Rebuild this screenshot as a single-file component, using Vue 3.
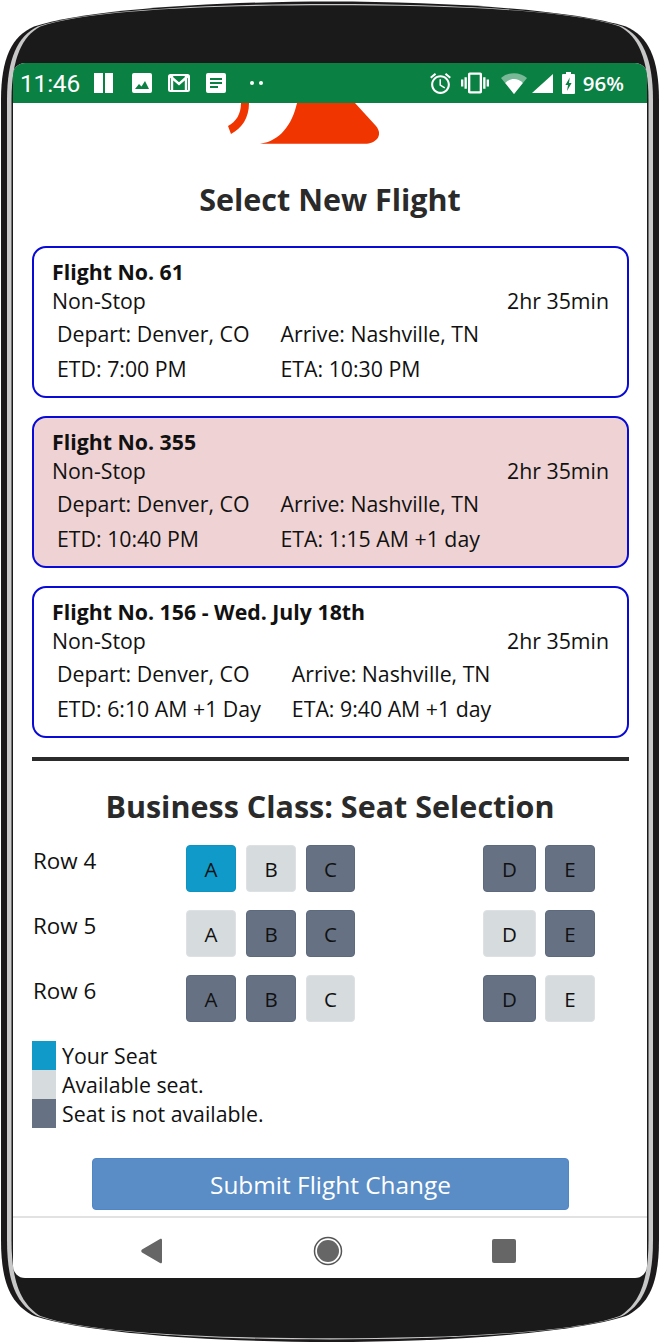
<script setup>
const flights = [
    { id: 61, title: 'Flight No. 61', depart: 'Denver, CO', arrive: 'Nashville, TN', etd: '7:00 PM', eta: '10:30 PM' },
    { id: 355, title: 'Flight No. 355', depart: 'Denver, CO', arrive: 'Nashville, TN', etd: '10:40 PM', eta: '1:15 AM +1 day', selected: true },
    { id: 156, title: 'Flight No. 156 - Wed. July 18th', depart: 'Denver, CO', arrive: 'Nashville, TN', etd: '6:10 AM +1 Day', eta: '9:40 AM +1 day' }
];

const seatRows = [
    { row: 4, seats: { A: 'mine', B: 'open', C: 'taken', D: 'taken', E: 'taken' } },
    { row: 5, seats: { A: 'open', B: 'taken', C: 'taken', D: 'open', E: 'taken' } },
    { row: 6, seats: { A: 'taken', B: 'taken', C: 'open', D: 'taken', E: 'open' } }
];

const legend = [
    { kind: 'mine', label: 'Your Seat' },
    { kind: 'open', label: 'Available seat.' },
    { kind: 'taken', label: 'Seat is not available.' }
];

// phone body outline, l/t = inset from the outer edge
function shell(l, t) {
    const x0 = 1 + l, x1 = 659 - l, y0 = 1.5 + t, y1 = 1342 - t;
    return `M${x0} 100 C${x0} 58 ${12 + l} 36 ${34 + l * 0.6} 26.5
        C90 9 220 ${y0} 330 ${y0} C440 ${y0} 570 9 ${626 - l * 0.6} 26.5
        C${648 - l} 36 ${x1} 58 ${x1} 100 L${x1} 1240
        C${x1} 1285 ${648 - l} 1305 ${626 - l * 0.6} 1316
        C570 1334 440 ${y1} 330 ${y1} C220 ${y1} 90 1334 ${34 + l * 0.6} 1316
        C${12 + l} 1305 ${x0} 1285 ${x0} 1240 Z`;
}
</script>

<template>
    <div class="phone">
        <svg class="phone-body" width="660" height="1343" viewBox="0 0 660 1343">
            <path :d="shell(0, 0)" fill="#1c1a1a" />
            <path :d="shell(6, 2.5)" fill="#c8c8c8" />
            <path :d="shell(10.500, 3.800)" fill="#1a1a1a" />
        </svg>

        <div class="screen">
            <div class="status-bar">
                <div class="status-left">
                    <span class="clock">11:46</span>
                    <svg width="19" height="20" viewBox="0 0 19 20"><path d="M0 0h9v20H0zM11 0h8v20h-8z" fill="#fff" /></svg>
                    <svg class="icon-image" width="20" height="20" viewBox="0 0 20 20">
                        <rect width="20" height="20" rx="2" fill="#fff" />
                        <path d="M3 16l4-5 2.5 2.5L13 8l4 8z" fill="#0b8043" />
                    </svg>
                    <svg width="22" height="18" viewBox="0 0 22 18">
                        <rect x="1" y="1" width="20" height="16" rx="1.5" fill="none" stroke="#fff" stroke-width="2" />
                        <path d="M2 2l9 8 9-8M4 2v15M18 2v15" fill="none" stroke="#fff" stroke-width="2.4" />
                    </svg>
                    <svg width="20" height="20" viewBox="0 0 20 20">
                        <rect width="20" height="20" rx="2" fill="#fff" />
                        <path d="M4 5h12v2H4zM4 9h12v2H4zM4 13h8v2H4z" fill="#0b8043" />
                    </svg>
                    <svg class="icon-dots" width="13" height="4" viewBox="0 0 13 4">
                        <circle cx="2" cy="2" r="2" fill="#fff" />
                        <circle cx="11" cy="2" r="2" fill="#fff" />
                    </svg>
                </div>
                <div class="status-right">
                    <svg width="25" height="25" viewBox="0 0 24 24" class="icon-alarm">
                        <path fill="#fff" d="M22 5.72l-4.6-3.86-1.29 1.53 4.6 3.86L22 5.72zM7.88 3.39L6.6 1.86 2 5.71l1.29 1.53 4.59-3.85zM12.5 8H11v6l4.75 2.85.75-1.23-4-2.37V8zM12 4c-4.97 0-9 4.03-9 9s4.03 9 9 9 9-4.03 9-9-4.03-9-9-9zm0 16c-3.87 0-7-3.13-7-7s3.13-7 7-7 7 3.13 7 7-3.13 7-7 7z" />
                    </svg>
                    <svg width="28" height="28" viewBox="0 0 24 24" class="icon-vibrate">
                        <path fill="#fff" d="M0 15h2V9H0v6zm3 2h2V7H3v10zm19-8v6h2V9h-2zm-3 8h2V7h-2v10zM16.5 3h-9C6.67 3 6 3.67 6 4.5v15c0 .83.67 1.5 1.5 1.5h9c.83 0 1.5-.67 1.5-1.5v-15c0-.83-.67-1.5-1.5-1.5zM16 19H8V5h8v14z" />
                    </svg>
                    <svg width="26" height="21" viewBox="0 0 26 21">
                        <path d="M0 5C7-1.5 19-1.5 26 5L13 21z" fill="#fff" opacity=".45" />
                        <path d="M4.2 10C9 4.8 17 4.8 21.8 10L13 21z" fill="#fff" />
                    </svg>
                    <svg class="icon-signal" width="21" height="19" viewBox="0 0 21 19"><path d="M21 0v19H0z" fill="#fff" /></svg>
                    <svg class="icon-battery" width="13" height="22" viewBox="0 0 13 22">
                        <path d="M4 0h5v2h3a1 1 0 011 1v18a1 1 0 01-1 1H1a1 1 0 01-1-1V3a1 1 0 011-1h3z" fill="#fff" />
                        <path d="M7.8 5.5L3.4 13H6l-1 6 4.6-8H7z" fill="#0b8043" />
                    </svg>
                    <span class="battery-text">96%</span>
                </div>
            </div>

            <div class="content">
                <svg class="logo" width="634" height="41" viewBox="13 103 634 41">
                    <path d="M297 103C292 125 280 141 260 143.8L365 143.8C375 143.8 384 136 376 126L355 103Z" fill="#f03500" />
                    <path d="M249 103C249 118 242 128 231 134L228 126C236 122 241 114 241 103Z" fill="#f03500" />
                </svg>

                <h1 class="page-title">Select New Flight</h1>

                <div class="flight-list">
                    <div v-for="flight in flights" :key="flight.id" class="flight-card" :class="{ selected: flight.selected }">
                        <div class="flight-title">{{ flight.title }}</div>
                        <div class="flight-sub">
                            <span>Non-Stop</span>
                            <span>2hr 35min</span>
                        </div>
                        <div class="flight-times">
                            <span>Depart: {{ flight.depart }}</span>
                            <span>Arrive: {{ flight.arrive }}</span>
                            <span>ETD: {{ flight.etd }}</span>
                            <span>ETA: {{ flight.eta }}</span>
                        </div>
                    </div>
                </div>

                <div class="divider"></div>

                <h2 class="seat-title">Business Class: Seat Selection</h2>

                <div class="seat-grid">
                    <template v-for="r in seatRows" :key="r.row">
                        <div class="row-label">Row {{ r.row }}</div>
                        <div v-for="(kind, letter) in r.seats" :key="letter" class="seat" :class="[kind, 'col-' + letter]">{{ letter }}</div>
                    </template>
                </div>

                <div class="legend">
                    <div v-for="item in legend" :key="item.kind" class="legend-item">
                        <span class="swatch" :class="item.kind"></span>
                        <span>{{ item.label }}</span>
                    </div>
                </div>

                <button class="submit-btn">Submit Flight Change</button>
            </div>

            <div class="nav-bar">
                <svg width="24" height="26" viewBox="0 0 24 26"><path d="M22 2v22c0 1-1 1.600-2 1L2 14.500c-1-.8-1-2 0-3L20 1c1-.6 2 0 2 1z" fill="#666" /></svg>
                <svg width="30" height="30" viewBox="0 0 30 30">
                    <circle cx="15" cy="15" r="13.500" fill="none" stroke="#555" stroke-width="1.500" />
                    <circle cx="15" cy="15" r="11" fill="#666" />
                </svg>
                <svg width="24" height="24" viewBox="0 0 24 24"><rect width="24" height="24" rx="2" fill="#666" /></svg>
            </div>
        </div>
    </div>
</template>

<style scoped>
.phone {
    position: relative;
    width: 660px;
    height: 1343px;
    padding: 63px 13px 65px;
    box-sizing: border-box;
    font-family: "Open Sans", sans-serif;
    color: #111;
    overflow: hidden;
}

.phone-body {
    position: absolute;
    left: 0;
    top: 0;
}

.screen {
    position: relative;
    height: 1215px;
    display: flex;
    flex-direction: column;
    background: #fff;
    border-radius: 12px;
    overflow: hidden;
}

.status-bar {
    height: 40px;
    flex: none;
    display: flex;
    align-items: center;
    justify-content: space-between;
    padding: 0 23px 0 7px;
    background: #0b8043;
    color: #fff;
}

.status-left,
.status-right {
    display: flex;
    align-items: center;
}

.status-left {
    gap: 16px;
}

.clock {
    font-family: Roboto, sans-serif;
    font-size: 24.500px;
    margin-right: -2px;
    letter-spacing: -0.2px;
}

.icon-image {
    margin-left: 3px;
}

.icon-dots {
    margin-left: 8px;
}

.status-right svg {
    flex: none;
}

.icon-alarm {
    margin-right: 8px;
}

.icon-vibrate {
    margin-right: 12px;
}

.icon-signal {
    margin-left: 5px;
    margin-right: 9px;
}

.icon-battery {
    margin-right: 8px;
}

.battery-text {
    font-size: 20.500px;
    font-weight: 600;
    line-height: 1;
}

.content {
    flex: 1;
    overflow: hidden;
}

.logo {
    display: block;
}

.page-title {
    margin: 35px 0 27px;
    font-size: 30.500px;
    line-height: 40px;
    font-weight: 700;
    text-align: center;
    color: #2a2a2a;
}

.flight-list {
    display: flex;
    flex-direction: column;
    gap: 18px;
    margin: 0 18px 0 19px;
}

.flight-card {
    height: 152px;
    box-sizing: border-box;
    padding: 11px 18px 0;
    border: 2px solid #0a0ad6;
    border-radius: 14px;
    font-size: 21.300px;
}

.flight-card.selected {
    background: #efd3d4;
}

.flight-title {
    font-weight: 700;
    line-height: 26px;
}

.flight-sub {
    display: flex;
    justify-content: space-between;
    line-height: 28px;
    margin-top: 2px;
}

.flight-times {
    display: grid;
    grid-template-columns: auto auto;
    justify-content: start;
    column-gap: 31px;
    row-gap: 7px;
    margin-top: 5px;
    padding-left: 5px;
    line-height: 28px;
}

.divider {
    height: 4px;
    margin: 19px 18px 0 19px;
    background: #2b2b2b;
}

.seat-title {
    margin: 25px 0 19px;
    font-size: 30.500px;
    line-height: 40px;
    font-weight: 700;
    text-align: center;
    color: #2a2a2a;
}

.seat-grid {
    display: grid;
    grid-template-columns: 143px 50px 50px 49px 171px 49px;
    column-gap: 10px;
    row-gap: 18px;
    margin-left: 20px;
}

.row-label {
    font-size: 22.400px;
    line-height: 32px;
}

.seat {
    height: 47px;
    display: flex;
    align-items: center;
    justify-content: center;
    padding-top: 1px;
    box-sizing: border-box;
    border: 1px solid transparent;
    border-radius: 4px;
    font-size: 20.500px;
}

.col-D {
    margin-left: 118px;
    width: 53px;
}

.col-E {
    margin-left: -1px;
}

.mine {
    background: #0f9aca;
    border-color: #0f93c1;
}

.open {
    background: #d6dbde;
    border-color: #dde1e4;
}

.taken {
    background: #667284;
    border-color: #5d6a7d;
}

.legend {
    margin: 19px 0 0 19px;
}

.legend-item {
    display: flex;
    align-items: center;
    gap: 6px;
    height: 29px;
    font-size: 21.300px;
}

.swatch {
    width: 24px;
    height: 29px;
    box-sizing: border-box;
    border: 1px solid transparent;
}

.submit-btn {
    display: block;
    width: 477px;
    height: 52px;
    margin: 30px 0 0 79px;
    padding: 0;
    background: #5a8cc6;
    border: 1px solid #4f86c8;
    border-radius: 4px;
    color: #fff;
    font-family: inherit;
    font-size: 24.400px;
}

.nav-bar {
    height: 62px;
    flex: none;
    display: flex;
    align-items: center;
    justify-content: space-between;
    padding: 6px 131px 0 127px;
    box-sizing: border-box;
    border-top: 2px solid #e2e2e2;
}
</style>

<style>
html,
body {
    margin: 0;
    background: #fff;
}
</style>
